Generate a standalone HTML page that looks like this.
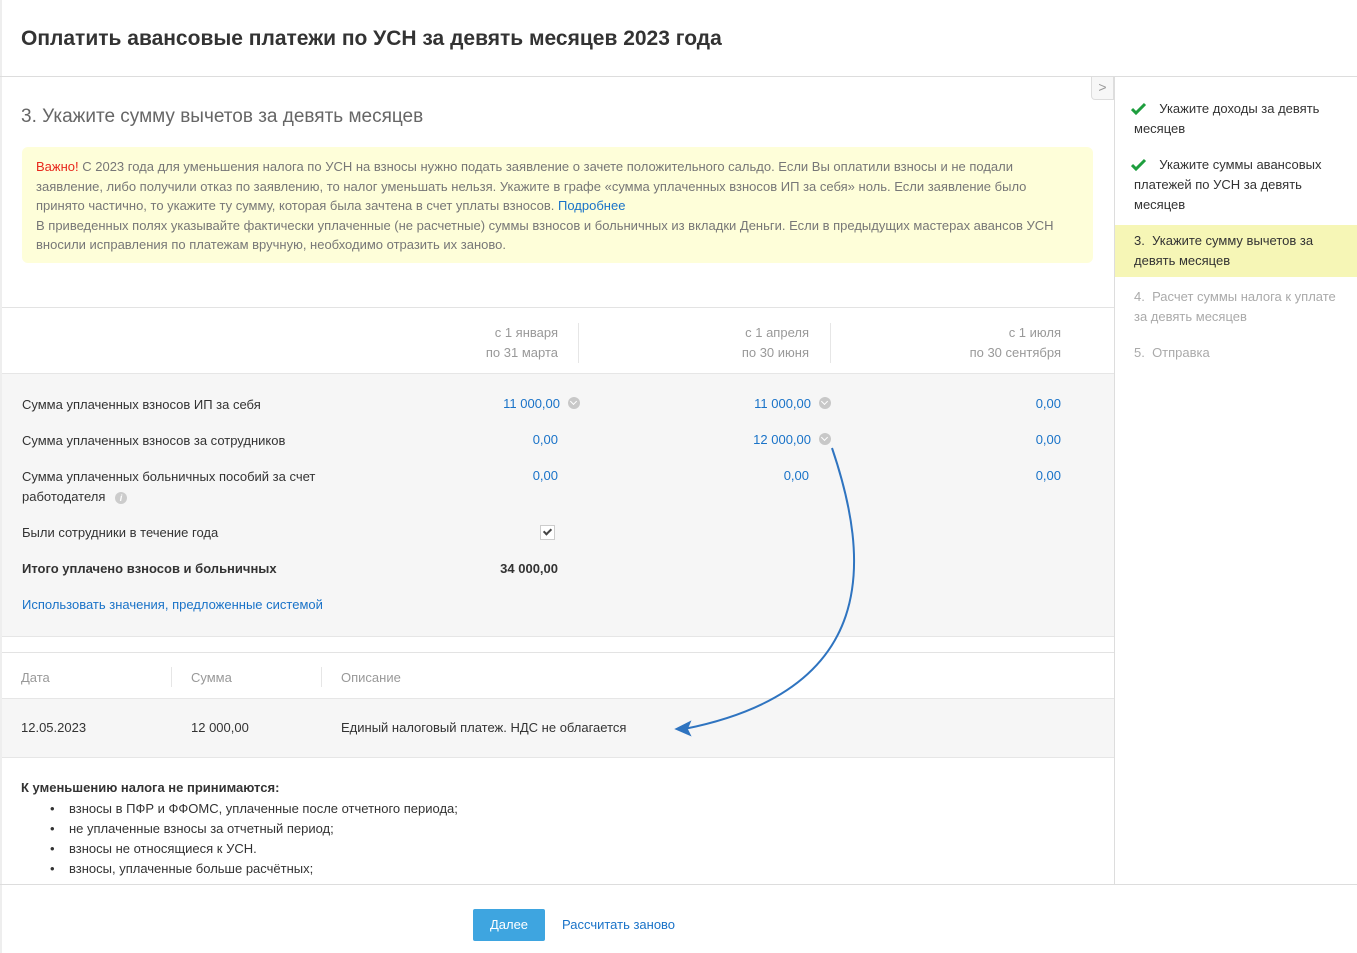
<!DOCTYPE html>
<html><head><meta charset="utf-8"><style>
*{margin:0;padding:0;box-sizing:border-box}
body{width:1357px;height:953px;position:relative;background:#fff;font-family:"Liberation Sans",Arial,sans-serif;color:#333;overflow:hidden;font-size:13px}
.a{position:absolute;white-space:nowrap}
.blue{color:#1a73c8}
.g{color:#999}
.hl{position:absolute;height:1px;background:#e3e3e3}
.r{text-align:right}
.dd{display:inline-block;width:12px;height:12px;border-radius:50%;background:#c8c8c8;vertical-align:-1px;margin-left:8px;position:relative}
.dd:after{content:"";position:absolute;left:3px;top:2px;width:4px;height:4px;border-right:1.6px solid #fff;border-bottom:1.6px solid #fff;transform:rotate(45deg)}
</style></head><body>
<div style="position:absolute;left:0;top:0;width:2px;height:953px;background:#eee"></div>
<div class="a" style="left:21px;top:27px;font-size:21px;font-weight:bold;color:#333">Оплатить авансовые платежи по УСН за девять месяцев 2023 года</div>
<div class="hl" style="left:0;top:76px;width:1357px;background:#ddd"></div>
<div style="position:absolute;left:1114px;top:76px;width:1px;height:808px;background:#ddd"></div>
<div class="hl" style="left:0;top:884px;width:1357px;background:#ddd"></div>

<div style="position:absolute;left:1091px;top:77px;width:23px;height:23px;border:1px solid #ddd;border-top:none;border-radius:0 0 0 4px;background:#f7f7f7;color:#999;font-size:14px;text-align:center;line-height:21px">&gt;</div>

<div class="a" style="left:21px;top:106px;font-size:19px;color:#666">3. Укажите сумму вычетов за девять месяцев</div>

<div style="position:absolute;left:22px;top:147px;width:1071px;height:116px;background:#fefed9;border-radius:6px;padding:10px 32px 10px 14px;color:#777;font-size:13px;line-height:19.5px">
<span style="color:#e8281c">Важно!</span> С 2023 года для уменьшения налога по УСН на взносы нужно подать заявление о зачете положительного сальдо. Если Вы оплатили взносы и не подали заявление, либо получили отказ по заявлению, то налог уменьшать нельзя. Укажите в графе «сумма уплаченных взносов ИП за себя» ноль. Если заявление было принято частично, то укажите ту сумму, которая была зачтена в счет уплаты взносов. <span class="blue">Подробнее</span><br>В приведенных полях указывайте фактически уплаченные (не расчетные) суммы взносов и больничных из вкладки Деньги. Если в предыдущих мастерах авансов УСН вносили исправления по платежам вручную, необходимо отразить их заново.
</div>

<div class="hl" style="left:2px;top:307px;width:1112px"></div>
<div class="a g r" style="left:400px;width:158px;top:323px;line-height:20px">с 1 января<br>по 31 марта</div>
<div style="position:absolute;left:578px;top:323px;width:1px;height:40px;background:#e6e6e6"></div>
<div class="a g r" style="left:650px;width:159px;top:323px;line-height:20px">с 1 апреля<br>по 30 июня</div>
<div style="position:absolute;left:830px;top:323px;width:1px;height:40px;background:#e6e6e6"></div>
<div class="a g r" style="left:900px;width:161px;top:323px;line-height:20px">с 1 июля<br>по 30 сентября</div>

<div style="position:absolute;left:2px;top:373px;width:1112px;height:264px;background:#f6f6f6;border-top:1px solid #e6e6e6;border-bottom:1px solid #e6e6e6"></div>
<div class="a" style="left:22px;top:397px">Сумма уплаченных взносов ИП за себя</div>
<div class="a" style="left:22px;top:433px">Сумма уплаченных взносов за сотрудников</div>
<div class="a" style="left:22px;top:467px;line-height:20px">Сумма уплаченных больничных пособий за счет<br>работодателя <span style="display:inline-block;width:12px;height:12px;border-radius:50%;background:#ccc;color:#fff;font-size:9px;text-align:center;line-height:12px;margin-left:6px;font-weight:bold;font-style:italic">i</span></div>
<div class="a" style="left:22px;top:525px">Были сотрудники в течение года</div>
<div class="a" style="left:22px;top:561px;font-weight:bold">Итого уплачено взносов и больничных</div>
<div class="a blue" style="left:22px;top:597px">Использовать значения, предложенные системой</div>

<div class="a blue r" style="left:400px;width:180px;top:396px">11 000,00<span class="dd"></span></div>
<div class="a blue r" style="left:400px;width:158px;top:432px">0,00</div>
<div class="a blue r" style="left:400px;width:158px;top:468px">0,00</div>
<div style="position:absolute;left:540px;top:525px;width:15px;height:15px;border:1px solid #ccc;background:#fff"></div>
<div style="position:absolute;left:545px;top:527px;width:5px;height:8px;border-right:2px solid #444;border-bottom:2px solid #444;transform:rotate(45deg)"></div>
<div class="a r" style="left:400px;width:158px;top:561px;font-weight:bold">34 000,00</div>

<div class="a blue r" style="left:650px;width:181px;top:396px">11 000,00<span class="dd"></span></div>
<div class="a blue r" style="left:650px;width:181px;top:432px">12 000,00<span class="dd"></span></div>
<div class="a blue r" style="left:650px;width:159px;top:468px">0,00</div>
<div class="a blue r" style="left:900px;width:161px;top:396px">0,00</div>
<div class="a blue r" style="left:900px;width:161px;top:432px">0,00</div>
<div class="a blue r" style="left:900px;width:161px;top:468px">0,00</div>

<div class="hl" style="left:2px;top:652px;width:1112px"></div>
<div class="a g" style="left:21px;top:670px">Дата</div>
<div style="position:absolute;left:171px;top:667px;width:1px;height:20px;background:#e6e6e6"></div>
<div class="a g" style="left:191px;top:670px">Сумма</div>
<div style="position:absolute;left:321px;top:667px;width:1px;height:20px;background:#e6e6e6"></div>
<div class="a g" style="left:341px;top:670px">Описание</div>
<div style="position:absolute;left:2px;top:698px;width:1112px;height:60px;background:#f6f6f6;border-top:1px solid #e6e6e6;border-bottom:1px solid #e6e6e6"></div>
<div class="a" style="left:21px;top:720px">12.05.2023</div>
<div class="a" style="left:191px;top:720px">12 000,00</div>
<div class="a" style="left:341px;top:720px">Единый налоговый платеж. НДС не облагается</div>

<svg style="position:absolute;left:0;top:0" width="1357" height="953">
<path d="M832 448 C 870 560, 880 690, 684 729" fill="none" stroke="#2f74c0" stroke-width="2"/>
<path d="M676 729 L690 722 L687 729 L690 735 Z" fill="#2f74c0" stroke="#2f74c0" stroke-width="1.5"/>
</svg>

<div class="a" style="left:21px;top:780px;font-weight:bold">К уменьшению налога не принимаются:</div>
<div class="a" style="left:50px;top:799px;line-height:20px">
• &nbsp;&nbsp;&nbsp;взносы в ПФР и ФФОМС, уплаченные после отчетного периода;<br>
• &nbsp;&nbsp;&nbsp;не уплаченные взносы за отчетный период;<br>
• &nbsp;&nbsp;&nbsp;взносы не относящиеся к УСН.<br>
• &nbsp;&nbsp;&nbsp;взносы, уплаченные больше расчётных;</div>

<div style="position:absolute;left:473px;top:909px;width:72px;height:32px;background:#3ea5e0;border-radius:2px;color:#fff;text-align:center;line-height:32px;font-size:13px">Далее</div>
<div class="a blue" style="left:562px;top:917px">Рассчитать заново</div>

<svg style="position:absolute;left:1131px;top:102px" width="16" height="14"><path d="M1 7 L5 11 L14 2" fill="none" stroke="#1e9e3e" stroke-width="3"/></svg>
<div class="a" style="left:1134px;top:99px;line-height:20px;font-size:13px">&nbsp;&nbsp;&nbsp;&nbsp;&nbsp;&nbsp;&nbsp;Укажите доходы за девять<br>месяцев</div>
<svg style="position:absolute;left:1131px;top:158px" width="16" height="14"><path d="M1 7 L5 11 L14 2" fill="none" stroke="#1e9e3e" stroke-width="3"/></svg>
<div class="a" style="left:1134px;top:155px;line-height:20px;font-size:13px">&nbsp;&nbsp;&nbsp;&nbsp;&nbsp;&nbsp;&nbsp;Укажите суммы авансовых<br>платежей по УСН за девять<br>месяцев</div>
<div style="position:absolute;left:1115px;top:225px;width:242px;height:52px;background:#f6f6b6"></div>
<div class="a" style="left:1134px;top:231px;line-height:20px;font-size:13px">3.&nbsp;&nbsp;Укажите сумму вычетов за<br>девять месяцев</div>
<div class="a" style="left:1134px;top:287px;line-height:20px;font-size:13px;color:#aaa">4.&nbsp;&nbsp;Расчет суммы налога к уплате<br>за девять месяцев</div>
<div class="a" style="left:1134px;top:343px;line-height:20px;font-size:13px;color:#aaa">5.&nbsp;&nbsp;Отправка</div>
</body></html>
